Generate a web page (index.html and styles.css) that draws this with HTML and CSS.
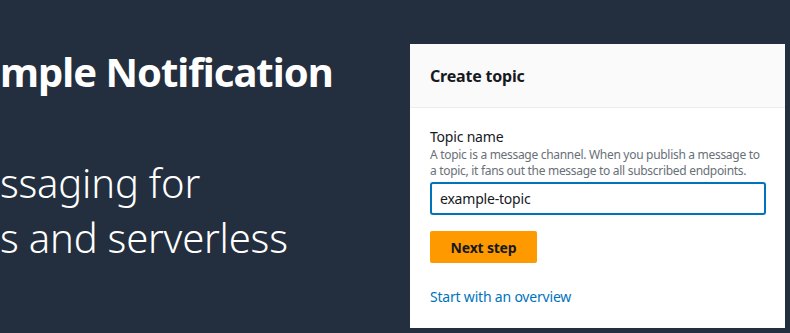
FILE: index.html
```html
<!DOCTYPE html>
<html lang="en">
<head>
    <meta charset="UTF-8">
    <meta name="viewport" content="width=device-width, initial-scale=1.0">
    <title>Amazon SNS</title>
    <link rel="stylesheet" href="styles.css">
</head>
<body>

    <div id="page">
        <section class="hero">
            <h1 class="hero-title">mple Notification</h1>
            <p class="hero-sub">ssaging for<br>s and serverless</p>
        </section>

        <div class="card">
            <div class="card-header">
                <h2>Create topic</h2>
            </div>
            <div class="card-body">
                <label class="field-label" for="topic-name">Topic name</label>
                <p class="field-desc">A topic is a message channel. When you publish a message to a topic, it fans out the message to all subscribed endpoints.</p>
                <input id="topic-name" class="field-input" type="text" value="example-topic">
                <button class="btn-primary">Next step</button>
                <a class="link" href="#">Start with an overview</a>
            </div>
        </div>
    </div>

</body>
</html>
```

FILE: styles.css
```css
body {
    font-family: "Noto Sans", Arial, sans-serif;
    background-color: #232f3e;
    color: #16191f;
    margin: 0;
    padding: 0;
    overflow: hidden;
}

#page {
    display: flex;
    height: 333px;
}

.hero {
    flex: 1;
    overflow: hidden;
    color: #fff;
    white-space: nowrap;
}

.hero-title {
    margin: 44px 0 0;
    font-size: 40px;
    font-weight: 700;
    letter-spacing: -1px;
    line-height: 56px;
}

.hero-sub {
    margin: 55px 0 0;
    font-size: 40px;
    font-weight: 300;
    letter-spacing: -0.2px;
    line-height: 55px;
}

.card {
    width: 375px;
    margin: 44px 5px 5px 0;
    background-color: #fff;
    display: flex;
    flex-direction: column;
}

.card-header {
    background-color: #fafafa;
    border-bottom: 1px solid #eaeded;
    height: 63px;
    padding: 0 20px;
    display: flex;
    align-items: center;
}

.card-header h2 {
    margin: 0;
    font-size: 16px;
    font-weight: 700;
    letter-spacing: -0.2px;
}

.card-body {
    padding: 19px 20px 0;
    display: flex;
    flex-direction: column;
    align-items: flex-start;
}

.field-label {
    font-size: 14px;
    line-height: 20px;
    letter-spacing: -0.2px;
}

.field-desc {
    margin: 0 0 3px;
    font-size: 12px;
    line-height: 16px;
    letter-spacing: -0.3px;
    color: #687078;
}

.field-input {
    box-sizing: border-box;
    width: 336px;
    height: 33px;
    border: 2px solid #0073bb;
    border-radius: 3px;
    padding: 0 8px;
    font-family: inherit;
    font-size: 14px;
    letter-spacing: -0.2px;
    color: #16191f;
    outline: none;
}

.btn-primary {
    margin-top: 16px;
    width: 107px;
    height: 32px;
    background-color: #ff9900;
    color: #16191f;
    border: none;
    border-radius: 2px;
    font-family: inherit;
    font-size: 14px;
    font-weight: 700;
    letter-spacing: -0.2px;
    cursor: pointer;
}

.link {
    margin-top: 24px;
    font-size: 14px;
    line-height: 20px;
    letter-spacing: -0.2px;
    color: #0073bb;
    text-decoration: none;
}
```
